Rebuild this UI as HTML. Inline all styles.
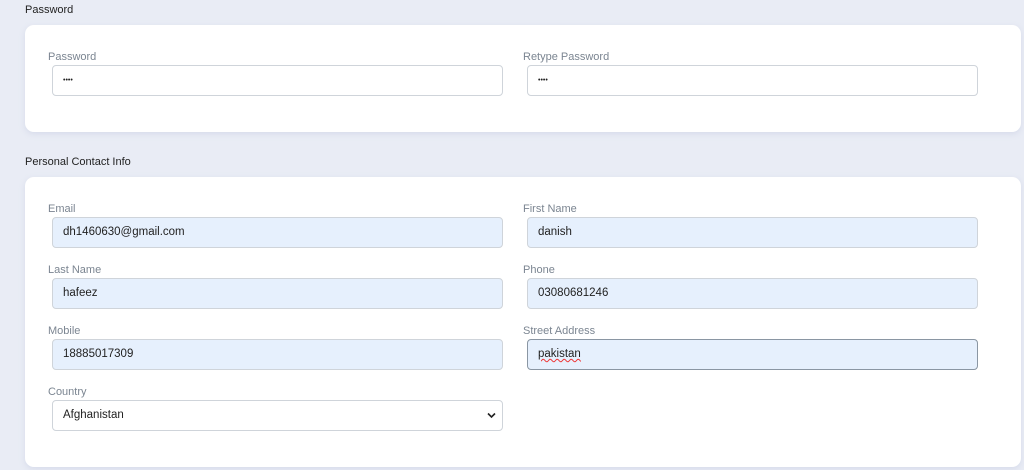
<!DOCTYPE html>
<html><head><style>
body{margin:0;width:1024px;height:470px;overflow:hidden;background:#e9ecf5;font-family:"Liberation Sans",sans-serif;position:relative}
.t{position:absolute;left:25px;font-size:11px;color:#222}
.card{position:absolute;left:25px;width:996px;background:#fff;border-radius:9px;box-shadow:0 2px 6px rgba(180,190,215,.35)}
.l{position:absolute;font-size:11px;color:#7b8591}
.i{position:absolute;width:449px;height:29px;border:1px solid #cfd4da;border-radius:4px;box-sizing:content-box;background:#fff;font-size:11.5px;color:#222;line-height:29px;text-indent:10px}
.f{background:#e6f0fd}
.x{left:52px}.y{left:527px}
.lx{left:48px}.ly{left:523px}
</style></head><body>
<div class="t" style="top:4px">Password</div>
<div class="card" style="top:25px;height:107px"></div>
<div class="l lx" style="top:51px">Password</div>
<div class="i x" style="top:65px;font-size:7px">••••</div>
<div class="l ly" style="top:51px">Retype Password</div>
<div class="i y" style="top:65px;font-size:7px">••••</div>
<div class="t" style="top:156px">Personal Contact Info</div>
<div class="card" style="top:177px;height:290px"></div>
<div class="l lx" style="top:203px">Email</div>
<div class="i x f" style="top:217px">dh1460630@gmail.com</div>
<div class="l ly" style="top:203px">First Name</div>
<div class="i y f" style="top:217px">danish</div>
<div class="l lx" style="top:264px">Last Name</div>
<div class="i x f" style="top:278px">hafeez</div>
<div class="l ly" style="top:264px">Phone</div>
<div class="i y f" style="top:278px">03080681246</div>
<div class="l lx" style="top:325px">Mobile</div>
<div class="i x f" style="top:339px">18885017309</div>
<div class="l ly" style="top:325px">Street Address</div>
<div class="i y f" style="top:339px;border-color:#8a96a3"><span style="text-decoration:underline wavy #e33;text-decoration-thickness:1px">pakistan</span></div>
<div class="l lx" style="top:386px">Country</div>
<div class="i x" style="top:400px">Afghanistan<svg style="position:absolute;right:6px;top:11px" width="9" height="7" viewBox="0 0 9 7"><path d="M1 1.5l3.5 3.5 3.5-3.5" stroke="#222" stroke-width="1.6" fill="none"/></svg></div>
</body></html>
